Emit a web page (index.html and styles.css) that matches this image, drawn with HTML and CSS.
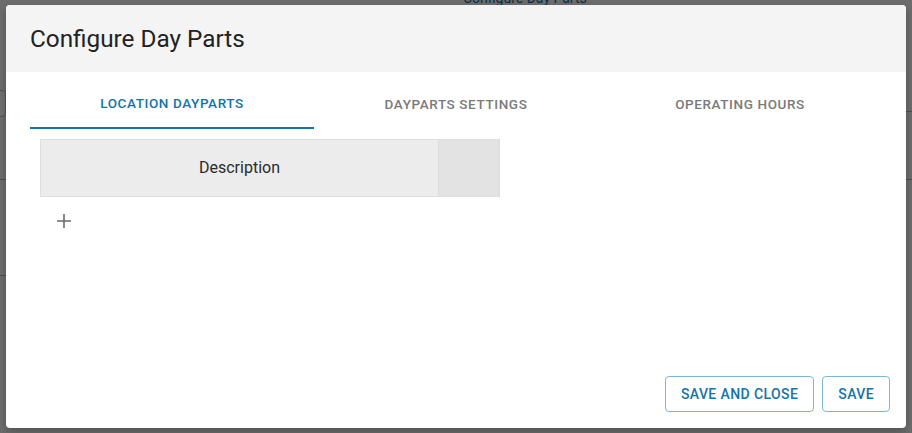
FILE: index.html
```html
<!DOCTYPE html>
<html lang="en">
<head>
<meta charset="utf-8">
<title>Configure Day Parts</title>
<link rel="stylesheet" href="styles.css">
</head>
<body>
<div class="page-behind">
  <a class="behind-link">Configure Day Parts</a>
  <div class="behind-box"></div>
  <div class="behind-line line-a"></div>
  <div class="behind-line line-b"></div>
  <div class="behind-line line-c"></div>
  <div class="behind-line line-d"></div>
</div>
<div class="backdrop"></div>
<div class="dialog" role="dialog">
  <div class="dialog-header">Configure Day Parts</div>
  <div class="dialog-content">
    <div class="tabs">
      <div class="tab active">Location Dayparts</div>
      <div class="tab">Dayparts Settings</div>
      <div class="tab">Operating Hours</div>
    </div>
    <div class="grid">
      <div class="grid-head">
        <div class="col-desc">Description</div>
        <div class="col-actions"></div>
      </div>
    </div>
    <button class="add-btn" aria-label="Add">
      <svg width="16" height="16" viewBox="0 0 16 16"><path d="M8 1v14M1 8h14" stroke="#6b6b6b" stroke-width="1.6" fill="none"/></svg>
    </button>
  </div>
  <div class="dialog-footer">
    <button class="btn">Save and Close</button>
    <button class="btn">Save</button>
  </div>
</div>
</body>
</html>
```
FILE: styles.css
```css
html, body {
  margin: 0;
  padding: 0;
  width: 912px;
  height: 433px;
  overflow: hidden;
  font-family: Roboto, "Noto Sans", Arial, sans-serif;
  background: #f7f7f7;
}

.page-behind {
  position: absolute;
  inset: 0;
}

.behind-link {
  position: absolute;
  left: 463px;
  top: -10px;
  font-size: 14px;
  color: #1b6ea3;
}

.behind-box {
  position: absolute;
  left: -6px;
  top: 90px;
  width: 10px;
  height: 25px;
  border: 1px solid #bdbdbd;
  border-radius: 4px;
  background: #fff;
}

.behind-line {
  position: absolute;
  height: 1px;
  background: #b5b5b5;
}
.line-a { left: 0; width: 8px; top: 179px; }
.line-b { left: 0; width: 8px; top: 275px; }
.line-c { left: 904px; width: 8px; top: 111px; }
.line-d { left: 904px; width: 8px; top: 179px; }

.backdrop {
  position: absolute;
  inset: 0;
  background: rgba(0, 0, 0, 0.56);
}

.dialog {
  position: absolute;
  left: 6px;
  top: 5px;
  width: 900px;
  height: 423px;
  background: #fff;
  border-radius: 4px;
  display: flex;
  flex-direction: column;
  overflow: hidden;
  box-shadow: 0 4px 10px rgba(0,0,0,0.25);
}

.dialog-header {
  height: 67px;
  flex: none;
  background: #f4f4f4;
  display: flex;
  align-items: center;
  padding: 0 24px;
  font-size: 24.3px;
  color: #222;
}

.dialog-content {
  flex: 1;
  padding: 7px 24px 0;
}

.tabs {
  display: grid;
  grid-template-columns: 1fr 1fr 1fr;
  height: 50px;
}

.tab {
  display: flex;
  align-items: center;
  justify-content: center;
  text-transform: uppercase;
  font-size: 13.5px;
  font-weight: 500;
  letter-spacing: 0.6px;
  color: #7a7a7a;
  box-sizing: border-box;
}

.tab.active {
  color: #1274a8;
  border-bottom: 2px solid #1274a8;
}

.grid {
  margin: 10px 0 0 10px;
  width: 460px;
}

.grid-head {
  display: flex;
  height: 58px;
  border: 1px solid #dedede;
  box-sizing: border-box;
  background: #ececec;
}

.col-desc {
  flex: 1;
  display: flex;
  align-items: center;
  justify-content: center;
  font-size: 16px;
  color: #2b2b2b;
  border-right: 1px solid #dcdcdc;
  padding-bottom: 2px;
}

.col-actions {
  width: 60px;
  background: #e3e3e3;
}

.add-btn {
  margin: 16px 0 0 26px;
  padding: 0;
  border: none;
  background: none;
  width: 16px;
  height: 16px;
  display: block;
}

.dialog-footer {
  flex: none;
  display: flex;
  justify-content: flex-end;
  gap: 8px;
  padding: 0 16px 16px;
}

.btn {
  height: 36px;
  padding: 0 15px;
  border: 1px solid #7cb8d8;
  border-radius: 4px;
  background: #fff;
  color: #1274a8;
  font-family: Roboto, Arial, sans-serif;
  font-size: 14px;
  font-weight: 500;
  letter-spacing: 0.4px;
  text-transform: uppercase;
}
```
